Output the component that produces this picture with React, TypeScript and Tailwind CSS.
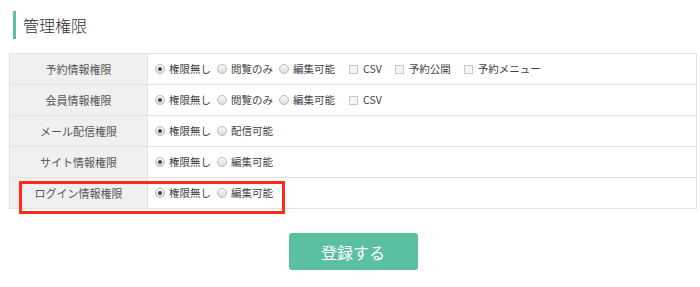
import React from "react";

type Opt = { kind: "radio" | "check"; label: string; checked?: boolean };

const rows: { title: string; opts: Opt[] }[] = [
  {
    title: "予約情報権限",
    opts: [
      { kind: "radio", label: "権限無し", checked: true },
      { kind: "radio", label: "閲覧のみ" },
      { kind: "radio", label: "編集可能" },
      { kind: "check", label: "CSV" },
      { kind: "check", label: "予約公開" },
      { kind: "check", label: "予約メニュー" },
    ],
  },
  {
    title: "会員情報権限",
    opts: [
      { kind: "radio", label: "権限無し", checked: true },
      { kind: "radio", label: "閲覧のみ" },
      { kind: "radio", label: "編集可能" },
      { kind: "check", label: "CSV" },
    ],
  },
  {
    title: "メール配信権限",
    opts: [
      { kind: "radio", label: "権限無し", checked: true },
      { kind: "radio", label: "配信可能" },
    ],
  },
  {
    title: "サイト情報権限",
    opts: [
      { kind: "radio", label: "権限無し", checked: true },
      { kind: "radio", label: "編集可能" },
    ],
  },
  {
    title: "ログイン情報権限",
    opts: [
      { kind: "radio", label: "権限無し", checked: true },
      { kind: "radio", label: "編集可能" },
    ],
  },
];

function Radio({ checked }: { checked?: boolean }) {
  return (
    <span className="flex h-[10px] w-[10px] items-center justify-center rounded-full border border-[#b9b9b9] bg-gradient-to-b from-[#fafafa] to-[#dcdcdc]">
      {checked && <span className="h-[4px] w-[4px] rounded-full bg-[#444]" />}
    </span>
  );
}

function Check() {
  return <span className="h-[9px] w-[9px] border border-[#c8c8c8] bg-[#f5f5f5]" />;
}

export default function App() {
  return (
    <div
      className="relative h-[287px] w-[700px] bg-white text-[#444]"
      style={{ fontFamily: '"Noto Sans CJK JP", "Noto Sans", sans-serif' }}
    >
      <div className="pl-[13px] pt-[11px]">
        <h2 className="flex h-[28px] items-center border-l-[3px] border-[#5cc0a0] pl-[7px] text-[16px] font-light leading-none text-[#333]">
          管理権限
        </h2>
      </div>

      <div className="ml-[9px] mt-[14px] w-[688px] border-b border-r border-[#e3e3e3]">
        {rows.map((r) => (
          <div key={r.title} className="flex h-[31px] border-t border-l border-[#e3e3e3]">
            <div className="flex w-[138px] shrink-0 items-center justify-center border-r border-[#e3e3e3] bg-[#f0f0f0] text-[11px] text-[#555]">
              {r.title}
            </div>
            <div className="flex items-center pl-[7px] text-[10.5px] text-[#444]">
              {r.opts.map((o, i) =>
                o.kind === "radio" ? (
                  <label key={i} className="mr-[6px] flex items-center gap-[4px]">
                    <Radio checked={o.checked} />
                    <span>{o.label}</span>
                  </label>
                ) : (
                  <label key={i} className="ml-[8px] mr-[5px] flex items-center gap-[5px]">
                    <Check />
                    <span>{o.label}</span>
                  </label>
                )
              )}
            </div>
          </div>
        ))}
      </div>

      <div className="mt-[24px] flex justify-center pl-[6px]">
        <button className="h-[37px] w-[129px] rounded-[3px] bg-[#5bc0a1] text-[16px] text-white">
          登録する
        </button>
      </div>

      <div className="pointer-events-none absolute left-[19px] top-[181px] h-[33px] w-[266px] border-[3px] border-[#ff2a1a]" />
    </div>
  );
}
